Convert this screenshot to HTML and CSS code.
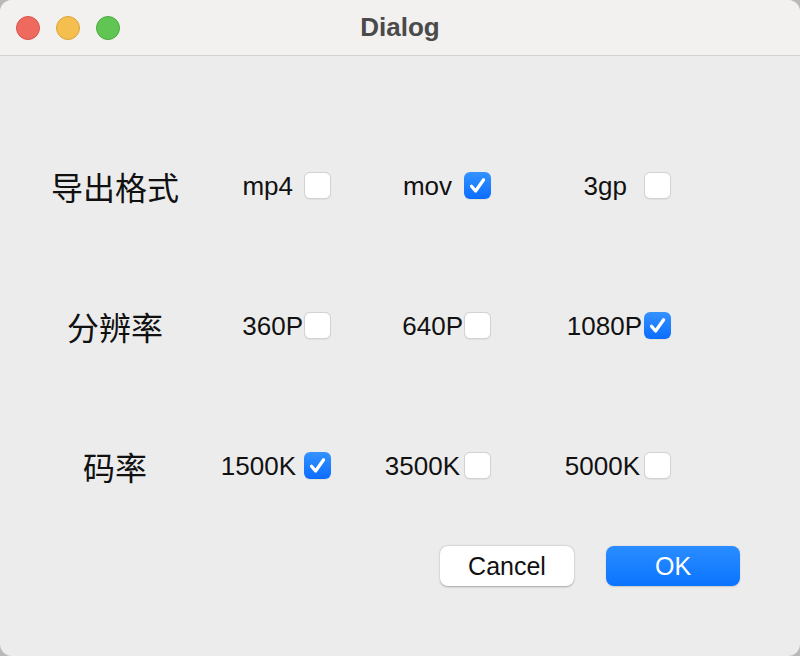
FILE: index.html
```html
<!DOCTYPE html>
<html>
<head>
<meta charset="utf-8">
<title>Dialog</title>
<link rel="stylesheet" href="styles.css">
</head>
<body>
<div class="window">
  <div class="titlebar">
    <div class="lights">
      <span class="light red"></span>
      <span class="light yellow"></span>
      <span class="light green"></span>
    </div>
    <div class="title">Dialog</div>
  </div>
  <div class="content">
    <div class="grid">
      <div class="label">导出格式</div>
      <div class="cell g11"><span class="opt">mp4</span><span class="cb"></span></div>
      <div class="cell g12"><span class="opt">mov</span><span class="cb on"><svg viewBox="0 0 27 27"><path d="M7.5 14.2 L11.6 19 L19.6 7.8"/></svg></span></div>
      <div class="cell g17"><span class="opt">3gp</span><span class="cb"></span></div>

      <div class="label">分辨率</div>
      <div class="cell g1"><span class="opt">360P</span><span class="cb"></span></div>
      <div class="cell g1"><span class="opt">640P</span><span class="cb"></span></div>
      <div class="cell g2"><span class="opt">1080P</span><span class="cb on"><svg viewBox="0 0 27 27"><path d="M7.5 14.2 L11.6 19 L19.6 7.8"/></svg></span></div>

      <div class="label">码率</div>
      <div class="cell g8"><span class="opt">1500K</span><span class="cb on"><svg viewBox="0 0 27 27"><path d="M7.5 14.2 L11.6 19 L19.6 7.8"/></svg></span></div>
      <div class="cell g4"><span class="opt">3500K</span><span class="cb"></span></div>
      <div class="cell g4"><span class="opt">5000K</span><span class="cb"></span></div>
    </div>
    <div class="buttons">
      <button class="btn cancel">Cancel</button>
      <button class="btn ok">OK</button>
    </div>
  </div>
</div>
</body>
</html>
```

FILE: styles.css
```css
html, body {
  margin: 0;
  padding: 0;
  width: 800px;
  height: 656px;
  background: #b9b9b9;
  overflow: hidden;
}
body {
  font-family: "Liberation Sans", Arial, sans-serif;
  color: #111;
}
.window {
  width: 800px;
  height: 656px;
  border-radius: 12px;
  overflow: hidden;
  background: #ececec;
  display: flex;
  flex-direction: column;
}
.titlebar {
  height: 55px;
  flex: none;
  background: #f2f1f0;
  border-bottom: 1px solid #d3d2d1;
  display: flex;
  align-items: center;
  position: relative;
}
.lights {
  display: flex;
  gap: 16px;
  padding-left: 16px;
  padding-top: 1px;
}
.light {
  width: 22px;
  height: 22px;
  border-radius: 50%;
  border: 1px solid transparent;
}
.red { background: #ee6a5f; border-color: #d8554b; }
.yellow { background: #f5bf4f; border-color: #d9a43b; }
.green { background: #61c554; border-color: #4ba93f; }
.title {
  position: absolute;
  left: 0;
  right: 0;
  top: 0;
  bottom: 0;
  display: flex;
  align-items: center;
  justify-content: center;
  font-weight: bold;
  font-size: 26px;
  color: #4a4a4a;
}
.content {
  flex: 1;
  padding-top: 116px;
}
.grid {
  display: grid;
  grid-template-columns: 230px 101px 160px 180px;
  grid-auto-rows: 27px;
  row-gap: 113px;
}
.label {
  font-family: "Noto Sans CJK SC", sans-serif;
  font-size: 32px;
  color: #111;
  display: flex;
  align-items: center;
  justify-content: center;
  line-height: 27px;
  padding-top: 2px;
}
.cell {
  display: flex;
  align-items: center;
  justify-content: flex-end;
}
.opt {
  font-size: 26px;
  line-height: 27px;
  color: #111;
  padding-top: 2px;
}
.g1 { gap: 1px; }
.g2 { gap: 2px; }
.g4 { gap: 4px; }
.g8 { gap: 8px; }
.g11 { gap: 11px; }
.g12 { gap: 12px; }
.g17 { gap: 17px; }
.cb {
  width: 27px;
  height: 27px;
  box-sizing: border-box;
  border-radius: 6px;
  background: #fff;
  border: 1px solid #d2d2d2;
  box-shadow: 0 0.5px 1px rgba(0,0,0,0.06);
  flex: none;
  display: block;
}
.cb.on {
  border: none;
  background: linear-gradient(#3593ff, #0a6dff);
}
.cb svg {
  width: 27px;
  height: 27px;
  display: block;
}
.cb path {
  fill: none;
  stroke: #fff;
  stroke-width: 3.2;
  stroke-linecap: round;
  stroke-linejoin: round;
}
.buttons {
  display: flex;
  justify-content: flex-end;
  gap: 32px;
  padding-right: 60px;
  margin-top: 67px;
}
.btn {
  width: 134px;
  height: 40px;
  border-radius: 8px;
  font-family: "Liberation Sans", Arial, sans-serif;
  font-size: 25px;
  border: none;
  padding: 0;
}
.cancel {
  background: #fff;
  color: #111;
  box-shadow: 0 0.5px 2px rgba(0,0,0,0.3);
}
.ok {
  background: linear-gradient(#2a8dff, #0a74ff);
  color: #fff;
  box-shadow: 0 0.5px 1.5px rgba(0,0,0,0.15);
}
```
